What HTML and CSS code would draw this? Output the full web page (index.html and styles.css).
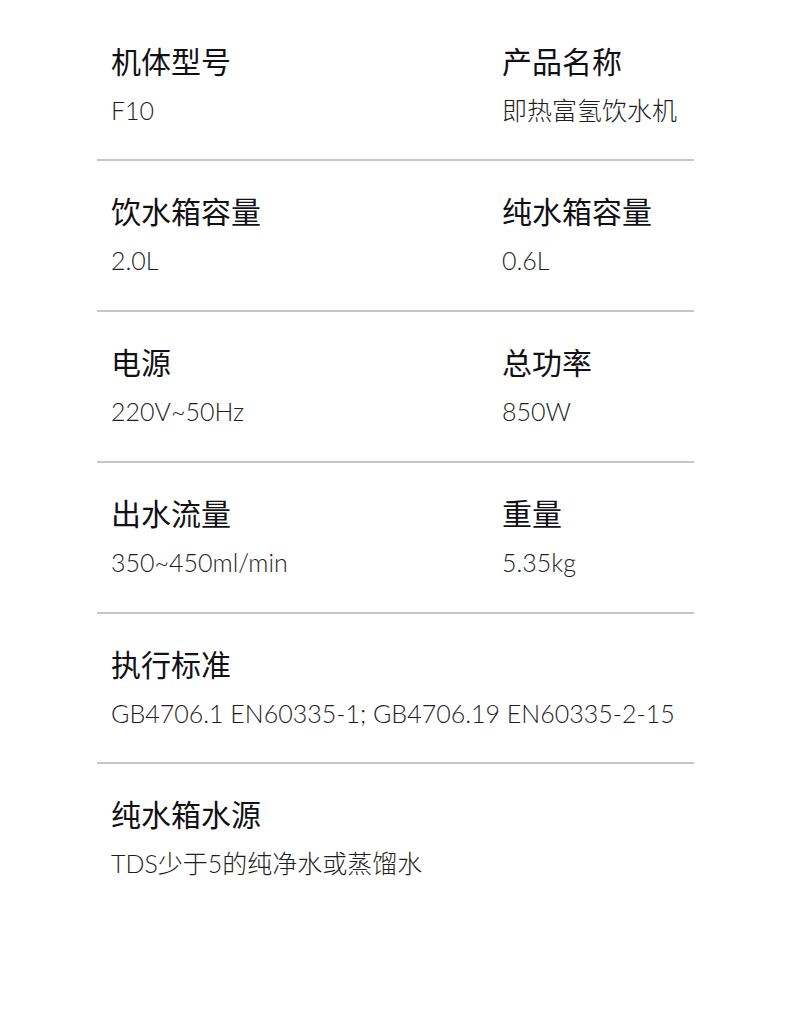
FILE: index.html
```html
<!DOCTYPE html>
<html lang="zh">
<head>
<meta charset="utf-8">
<link rel="stylesheet" href="styles.css">
</head>
<body>
<div class="specs">
  <div class="row">
    <div class="cell"><div class="label">机体型号</div><div class="value">F10</div></div>
    <div class="cell"><div class="label">产品名称</div><div class="value">即热富氢饮水机</div></div>
  </div>
  <div class="row">
    <div class="cell"><div class="label">饮水箱容量</div><div class="value">2.0L</div></div>
    <div class="cell"><div class="label">纯水箱容量</div><div class="value">0.6L</div></div>
  </div>
  <div class="row">
    <div class="cell"><div class="label">电源</div><div class="value">220V~50Hz</div></div>
    <div class="cell"><div class="label">总功率</div><div class="value">850W</div></div>
  </div>
  <div class="row">
    <div class="cell"><div class="label">出水流量</div><div class="value">350~450ml/min</div></div>
    <div class="cell"><div class="label">重量</div><div class="value">5.35kg</div></div>
  </div>
  <div class="row">
    <div class="cell"><div class="label">执行标准</div><div class="value">GB4706.1 EN60335-1; GB4706.19 EN60335-2-15</div></div>
  </div>
  <div class="row last">
    <div class="cell"><div class="label">纯水箱水源</div><div class="value">TDS少于5的纯净水或蒸馏水</div></div>
  </div>
</div>
</body>
</html>
```

FILE: styles.css
```css
html, body {
  margin: 0;
  padding: 0;
  background: #ffffff;
}
body {
  font-family: "Noto Sans CJK SC", "Noto Sans", sans-serif;
  padding-top: 11px;
}
.specs {
  margin-left: 97px;
  width: 597px;
}
.row {
  display: grid;
  grid-template-columns: 391px 1fr;
  padding: 29px 0 31px 14px;
  border-bottom: 2px solid #c6c6c6;
}
.row:nth-child(2) {
  padding-bottom: 32px;
}
.row:nth-child(3),
.row:nth-child(4) {
  padding-bottom: 32px;
}
.row.last {
  border-bottom: none;
}
.cell {
  white-space: nowrap;
}
.label {
  font-size: 30px;
  line-height: 40px;
  font-weight: 400;
  color: #111115;
}
.value {
  margin-top: 12px;
  font-family: "Lato", "Noto Sans CJK SC", sans-serif;
  font-size: 25px;
  line-height: 36px;
  font-weight: 300;
  color: #1e1e22;
}
```
